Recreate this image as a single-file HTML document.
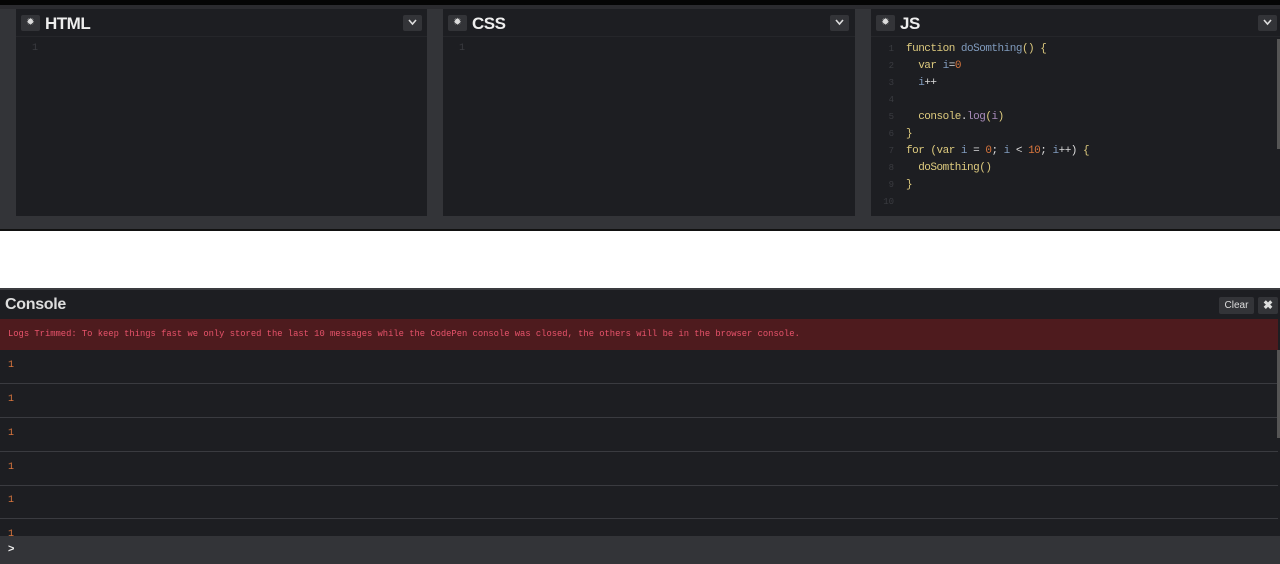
<!DOCTYPE html>
<html><head><meta charset="utf-8"><style>
*{margin:0;padding:0;box-sizing:border-box}
body{width:1280px;height:562px;overflow:hidden;background:#fff;font-family:"Liberation Sans",sans-serif;position:relative}
.abs{position:absolute}
.top{left:0;top:0;width:1280px;height:5px;background:#050505}
.top2{left:0;top:5px;width:1280px;height:4px;background:#2b2b2f}
.edit{left:0;top:9px;width:1280px;height:207px;background:#333438}
.panel{top:9px;height:207px;background:#1d1e22}
.hdr{position:absolute;left:0;top:0;right:0;height:28px;border-bottom:1px solid #25262a}
.gear{position:absolute;left:5px;top:6px;width:19px;height:16px;background:#333438;border-radius:2px;color:#ddd;font-size:10px;text-align:center;line-height:16px}
.title{position:absolute;left:29px;top:5px;font-size:17px;font-weight:bold;color:#eee;letter-spacing:-0.5px}
.dd{position:absolute;top:6px;width:19px;height:16px;background:#333438;border-radius:2px}
.dd svg{position:absolute;left:5px;top:4px}
.ln{position:absolute;font-family:"Liberation Mono",monospace;font-size:10px;color:#3a3b40}
.code{position:absolute;left:906px;top:41px;font-family:"Liberation Mono",monospace;font-size:11px;letter-spacing:-0.5px;line-height:17px;color:#ddd;white-space:pre}
.nums{position:absolute;left:876px;top:41px;font-family:"Liberation Mono",monospace;font-size:9px;line-height:17px;color:#3a3b40;white-space:pre;text-align:right;width:18px}
.k{color:#ddca7e}.f{color:#809bbd}.n{color:#d9763d}.v{color:#809bbd}.p{color:#a88bba}
.bar{left:0;top:216px;width:1280px;height:13px;background:#333438}
.con{left:0;top:288px;width:1280px;height:274px;background:#1d1e22;border-top:2px solid #3a3b3f}
.ch{position:absolute;left:5px;top:6px;font-size:16px;font-weight:bold;color:#ddd;letter-spacing:-0.3px}
.btn{position:absolute;top:7px;height:17px;background:#333438;border-radius:2px;color:#ddd;font-size:10px;line-height:17px;text-align:center}
.err{position:absolute;left:0;top:29px;width:1278px;height:31px;background:#4e1b1e;color:#e8536b;font-family:"Liberation Mono",monospace;font-size:8.8px;line-height:31px;padding-left:8px;white-space:pre}
.row{position:absolute;left:0;width:1278px;height:34px;border-bottom:1px solid #3a3b40;color:#d9763d;font-family:"Liberation Mono",monospace;font-size:10px;padding-left:8px;line-height:32px}
.inp{position:absolute;left:0;top:246px;width:1280px;height:28px;background:#333438;color:#eee;font-size:11px;padding-left:8px;line-height:26px;font-weight:bold}
.sb{position:absolute;right:0;width:3px;background:#555}
</style></head><body>
<div class="abs top"></div><div class="abs top2"></div>
<div class="abs edit"></div>
<div class="abs panel" style="left:16px;width:411px">
 <div class="hdr"><div class="gear">✹</div><div class="title">HTML</div><div class="dd" style="left:387px"><svg width="9" height="7"><path d="M1 1 L4.5 5 L8 1" stroke="#ddd" stroke-width="1.6" fill="none"/></svg></div></div>
 <div class="ln" style="left:16px;top:34px">1</div>
</div>
<div class="abs panel" style="left:443px;width:412px">
 <div class="hdr"><div class="gear">✹</div><div class="title">CSS</div><div class="dd" style="left:387px"><svg width="9" height="7"><path d="M1 1 L4.5 5 L8 1" stroke="#ddd" stroke-width="1.6" fill="none"/></svg></div></div>
 <div class="ln" style="left:16px;top:34px">1</div>
</div>
<div class="abs panel" style="left:871px;width:409px">
 <div class="hdr"><div class="gear">✹</div><div class="title">JS</div><div class="dd" style="left:387px"><svg width="9" height="7"><path d="M1 1 L4.5 5 L8 1" stroke="#ddd" stroke-width="1.6" fill="none"/></svg></div></div>
 <div class="sb" style="top:30px;height:110px"></div>
</div>
<div class="nums">1
2
3
4
5
6
7
8
9
10</div>
<div class="code"><span class="k">function</span> <span class="f">doSomthing</span><span class="k">() {</span>
  <span class="k">var</span> <span class="v">i</span>=<span class="n">0</span>
  <span class="v">i</span>++

  <span class="k">console</span>.<span class="p">log</span><span class="k">(</span><span class="p">i</span><span class="k">)</span>
<span class="k">}</span>
<span class="k">for (var</span> <span class="v">i</span> = <span class="n">0</span>; <span class="v">i</span> &lt; <span class="n">10</span>; <span class="v">i</span>++) <span class="k">{</span>
  <span class="k">doSomthing()</span>
<span class="k">}</span>
</div>
<div class="abs bar"></div>
<div class="abs" style="left:0;top:229px;width:1280px;height:2px;background:#111"></div>
<div class="abs con">
 <div class="ch">Console</div>
 <div class="btn" style="left:1219px;width:35px">Clear</div>
 <div class="btn" style="left:1258px;width:20px;font-size:12px;font-weight:bold">✖</div>
 <div class="err">Logs Trimmed: To keep things fast we only stored the last 10 messages while the CodePen console was closed, the others will be in the browser console.</div>
 <div class="row" style="top:60px">1</div>
 <div class="row" style="top:94px">1</div>
 <div class="row" style="top:128px">1</div>
 <div class="row" style="top:162px">1</div>
 <div class="row" style="top:195px">1</div>
 <div class="row" style="top:229px;border:none">1</div>
 <div class="sb" style="top:60px;height:88px"></div>
 <div class="inp">&gt;</div>
</div>
</body></html>
